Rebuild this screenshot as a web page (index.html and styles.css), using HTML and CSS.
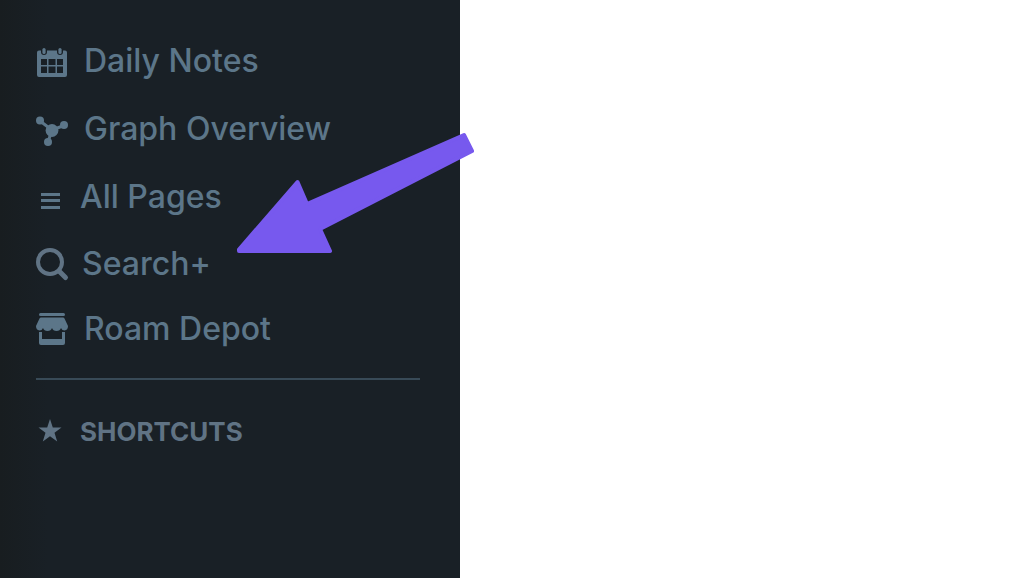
FILE: index.html
```
<!DOCTYPE html>
<html lang="en">
<head>
<meta charset="utf-8">
<meta name="viewport" content="width=device-width, initial-scale=1">
<title>Daily Notes</title>
<link rel="stylesheet" href="styles.css">
</head>
<body>
<div class="app">
  <aside class="sidebar">
    <nav class="menu" aria-label="Main">
      <a class="item" href="#daily">
        <svg class="icon" viewBox="0 0 32 32" aria-hidden="true"><path fill-rule="evenodd" d="M3 5.500h2V7a3 3 0 0 0 6 0V5.500h10V7a3 3 0 0 0 6 0V5.500h2q2 0 2 2V30q0 2-2 2H3q-2 0-2-2V7.500q0-2 2-2zM5 14v6h6v-6zm7.500 0v6h7v-6zM21 14v6h6v-6zM5 21.500v6.500h6v-6.500zm7.500 0v6.500h7v-6.500zm8.500 0v6.500h6v-6.500z"/><rect x="6.400" y="3" width="3.200" height="6" rx="1.600"/><rect x="22.400" y="3" width="3.200" height="6" rx="1.600"/></svg>
        <span>Daily Notes</span>
      </a>
      <a class="item" href="#graph">
        <svg class="icon" viewBox="0 0 32 32" aria-hidden="true"><path d="M4 8l12 9 12-4.500M16 17l-4 12" fill="none" stroke="currentColor" stroke-width="3"/><circle cx="16" cy="17.500" r="6.400"/><circle cx="4" cy="7.500" r="4"/><circle cx="28" cy="12" r="4"/><circle cx="12" cy="29" r="4"/></svg>
        <span>Graph Overview</span>
      </a>
      <a class="item narrow" href="#pages">
        <svg class="icon" viewBox="0 0 28 32" aria-hidden="true"><path d="M5 12h19v3H5zm0 6h19v3H5zm0 7h19v3H5z"/></svg>
        <span>All Pages</span>
      </a>
      <a class="item compact search" href="#search">
        <svg class="icon" viewBox="0 0 32 32" aria-hidden="true"><g fill="none" stroke="currentColor"><circle cx="14" cy="14" r="12" stroke-width="4"/><path d="M23.500 23.500l6 6" stroke-width="5" stroke-linecap="round"/></g></svg>
        <span>Search+</span>
      </a>
      <a class="item compact" href="#depot">
        <svg class="icon" viewBox="0 0 32 32" aria-hidden="true"><rect x="3" y="0" width="26" height="3" rx="1.500"/><path d="M5 4.500h22q1 0 1.500 1L32 13q0 4-3.500 4.500Q26 17.500 25 15q-1 3-4.500 3T16 15q-1 3-4.500 3T7 15q-1 2.500-3.500 2.500Q0 17 0 13L3.500 5.500Q4 4.500 5 4.500z"/><path d="M3 19h3v7h20v-7h3v11q0 2-2 2H5q-2 0-2-2z"/></svg>
        <span>Roam Depot</span>
      </a>
    </nav>
    <hr class="divider">
    <h2 class="shortcuts">
      <svg class="star" viewBox="0 0 28 28" aria-hidden="true"><path d="M14 1l2.800 8.600h8.700l-7 5.100L21.200 23.500 14 18.200l-7.200 5.300 2.700-8.800-7-5.100h8.700z"/></svg>
      <span>SHORTCUTS</span>
    </h2>
  </aside>
  <main class="page"></main>
  <svg class="arrow" viewBox="0 0 242 124" aria-hidden="true"><path d="M5 118.500L63.500 51 73 73 230 4l8 16L86 98l10 22H5z"/></svg>
</div>
</body>
</html>
```
FILE: styles.css
```
body {
  margin: 0;
  background: #fff;
  font-family: Inter, sans-serif;
}

.app {
  position: relative;
  display: flex;
  min-height: 100vh;
}

.sidebar {
  box-sizing: border-box;
  flex: 0 0 460px;
  padding: 27px 40px 40px 36px;
  background: linear-gradient(to right, #181d20, #192026 48px);
  color: #5c7689;
}

.page {
  flex: 1;
}

.menu {
  display: flex;
  flex-direction: column;
}

.item {
  display: flex;
  align-items: center;
  gap: 16px;
  height: 68px;
  color: inherit;
  font-size: 32px;
  font-weight: 500;
  line-height: 40px;
  text-decoration: none;
}

.compact {
  height: 65px;
}

.narrow .icon {
  width: 28px;
}

.search {
  gap: 14px;
}

.icon {
  flex: none;
  width: 32px;
  height: 32px;
  overflow: visible;
  fill: currentColor;
}

.search .icon {
  color: #607384;
}

.divider {
  height: 2px;
  margin: 17px 0 0;
  border: 0;
  background: #384a57;
}

.shortcuts {
  display: flex;
  align-items: center;
  gap: 16px;
  margin: 36px 0 0;
  color: #607384;
  font-size: 26px;
  font-weight: 700;
  line-height: 32px;
}

.star {
  width: 28px;
  height: 28px;
  fill: currentColor;
}

.arrow {
  position: absolute;
  top: 131px;
  left: 234px;
  width: 242px;
  height: 124px;
  fill: #7759ee;
  stroke: #7759ee;
  stroke-width: 4px;
  stroke-linejoin: round;
}
```
